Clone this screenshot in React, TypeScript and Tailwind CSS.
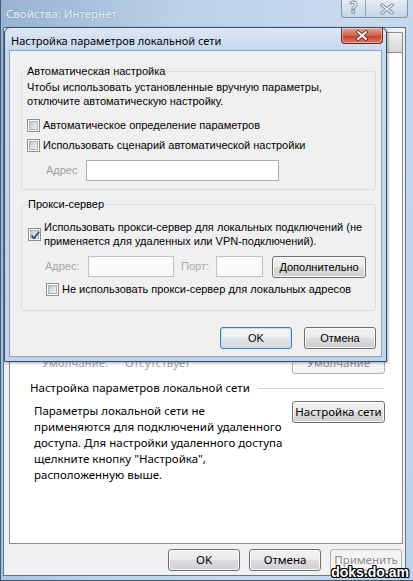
import React from "react";

const SEG = "font-['Noto_Sans',sans-serif]";
const TAH = "font-['Liberation_Sans',Arial,sans-serif]";

function Check({ checked }: { checked?: boolean }) {
  return (
    <span className="relative w-[13px] h-[13px] shrink-0 border border-[#8e8f8f] bg-white p-[1px] flex">
      <span className="flex-1 border border-[#aeb3b9] bg-[linear-gradient(135deg,#c6cacf,#f0f0f0)]" />
      {checked && (
        <svg className="absolute left-0 top-0" width="13" height="13" viewBox="0 0 13 13">
          <path d="M2.5 6.5 L5 9.2 L10.2 2.8" fill="none" stroke="#33457a" strokeWidth="1.8" />
        </svg>
      )}
    </span>
  );
}

function Btn({ children, def, disabled, className = "" }: { children: React.ReactNode; def?: boolean; disabled?: boolean; className?: string }) {
  const base = "h-[22px] rounded-[3px] flex items-center justify-center shrink-0 whitespace-nowrap ";
  if (disabled)
    return <div className={base + "border border-[#adb2b5] bg-[#f4f4f4] text-[#8d8d8d] " + className}>{children}</div>;
  if (def)
    return (
      <div className={base + "border border-[#3c7fb1] bg-[linear-gradient(#f4f6f7_0%,#eef0f2_49%,#e2e5e8_50%,#d6dadd_100%)] shadow-[inset_0_0_0_1px_#bfe3f5] text-black " + className}>
        {children}
      </div>
    );
  return (
    <div className={base + "border border-[#707070] bg-[linear-gradient(#f2f2f2_0%,#ebebeb_49%,#dddddd_50%,#cfcfcf_100%)] shadow-[inset_0_0_0_1px_#fbfbfb] text-black " + className}>
      {children}
    </div>
  );
}

function LanDialog() {
  return (
    <div className="absolute left-[3px] top-[27px] w-[383px] h-[335px] border border-[#34506b] rounded-t-[6px] bg-[linear-gradient(#dbe7f4,#c6d9ee_22px,#bfd3ea)] flex flex-col shadow-[1px_1px_3px_rgba(0,0,0,0.35)]">
      <div className="h-[22px] flex items-start shrink-0">
        <div className={SEG + " pl-[6px] pt-[5px] text-[11px] leading-[16px] text-black whitespace-nowrap"}>
          Настройка параметров локальной сети
        </div>
        <div className="ml-auto mr-[3px] w-[42px] h-[16px] rounded-b-[4px] border border-t-0 border-[#6a2a1e] bg-[linear-gradient(#eaa596,#d0604b_50%,#c24530_55%,#d97a63)] shadow-[inset_0_0_0_1px_rgba(255,255,255,0.35)] flex items-center justify-center">
          <svg width="14" height="11" viewBox="0 0 14 11">
            <path d="M3 2 L11 9 M11 2 L3 9" stroke="#5a2318" strokeWidth="3.6" strokeLinecap="round" />
            <path d="M3 2 L11 9 M11 2 L3 9" stroke="#ffffff" strokeWidth="2" strokeLinecap="round" />
          </svg>
        </div>
      </div>
      <div className={TAH + " flex-1 mx-[4px] mb-[4px] border border-[#8da3b9] bg-[#f0f0f0] flex flex-col pl-[11px] pr-[5px] pt-[13px] text-[11px] text-black"}>
        <fieldset className="border border-[#d5dfe5] rounded-[3px] pl-[5px] pb-[8px]">
          <legend className="px-[1px] ml-[-1px] leading-[14px]">Автоматическая настройка</legend>
          <div className="mt-[2px] leading-[14px]">
            Чтобы использовать установленные вручную параметры,
            <br />
            отключите автоматическую настройку.
          </div>
          <div className="mt-[10px] h-[14px] flex items-center gap-[3px]">
            <Check />
            <span className="leading-[14px]">Автоматическое определение параметров</span>
          </div>
          <div className="mt-[6px] h-[14px] flex items-center gap-[3px]">
            <Check />
            <span className="leading-[14px]">Использовать сценарий автоматической настройки</span>
          </div>
          <div className="mt-[8px] flex items-center pl-[19px]">
            <span className="w-[40px] text-[#a0a0a0]">Адрес</span>
            <span className="w-[193px] h-[21px] border border-[#adadad] bg-white" />
          </div>
        </fieldset>
        <fieldset className="mt-[7px] border border-[#d5dfe5] rounded-[3px] pl-[6px] pb-[14px]">
          <legend className="px-[1px] ml-[-1px] leading-[14px]">Прокси-сервер</legend>
          <div className="mt-[9px] flex items-center gap-[3px]">
            <Check checked />
            <span className="leading-[14px]">
              Использовать прокси-сервер для локальных подключений (не
              <br />
              применяется для удаленных или VPN-подключений).
            </span>
          </div>
          <div className="mt-[7px] h-[22px] flex items-center pl-[17px]">
            <span className="w-[43px] text-[#a9a9a9]">Адрес:</span>
            <span className="w-[86px] h-[21px] border border-[#c2c2c2] bg-[#fafafa]" />
            <span className="ml-[7px] w-[35px] text-[#a9a9a9]">Порт:</span>
            <span className="w-[47px] h-[21px] border border-[#c2c2c2] bg-[#fafafa]" />
            <Btn className="ml-[9px] w-[94px] mt-[2px]">Дополнительно</Btn>
          </div>
          <div className="mt-[5px] h-[14px] flex items-center gap-[3px] pl-[18px]">
            <Check />
            <span className="leading-[14px]">Не использовать прокси-сервер для локальных адресов</span>
          </div>
        </fieldset>
        <div className="mt-[16px] flex justify-end gap-[12px]">
          <Btn def className="w-[72px]">OK</Btn>
          <Btn className="w-[72px]">Отмена</Btn>
        </div>
      </div>
    </div>
  );
}

export default function App() {
  return (
    <div className={SEG + " w-[413px] h-[581px] relative overflow-hidden bg-[linear-gradient(100deg,#98b3d0,#bcd1e8_35%,#c8daee_70%,#bdd2e8)] flex flex-col border-l border-b border-[#3f5b76]"}>
      <div className="h-[27px] shrink-0 flex items-start">
        <div className="pl-[5px] pt-[6px] text-[11.5px] leading-[16px] text-[#e9eff6] [text-shadow:0_0_2px_#7f98b3] whitespace-nowrap">
          Свойства: Интернет
        </div>
        <div className="ml-auto mr-[5px] flex h-[18px] border border-t-0 border-[#7d93aa] rounded-b-[4px] overflow-hidden bg-[linear-gradient(#e6eef6,#d3e0ed_50%,#c6d6e7)]">
          <div className={"w-[24px] flex items-center justify-center border-r border-[#8ea3b8] text-[15px] font-bold text-[#f4f7fa] [-webkit-text-stroke:0.8px_#7a8899] font-['DejaVu_Sans',sans-serif]"}>?</div>
          <div className="w-[41px] flex items-center justify-center">
            <svg width="16" height="12" viewBox="0 0 16 12">
              <path d="M3 2 L13 10 M13 2 L3 10" stroke="#7a8899" strokeWidth="3.4" strokeLinecap="round" />
              <path d="M3 2 L13 10 M13 2 L3 10" stroke="#f5f8fb" strokeWidth="1.6" strokeLinecap="round" />
            </svg>
          </div>
        </div>
      </div>
      <div className="flex-1 ml-[2px] mr-[7px] mb-[4px] border border-[#5b7791] bg-[#f0f0f0] flex flex-col">
        <div className="h-[24px] shrink-0 flex items-end justify-end pr-[2px]">
          <div className="w-[60px] h-[20px] border border-b-0 border-[#898c95] rounded-t-[2px] bg-[linear-gradient(#f2f2f2,#d6d6d6)]" />
        </div>
        <div className="flex-1 ml-[5px] mr-[2px] border border-[#898c95] bg-white flex flex-col text-[11.5px] text-black">
          <div className="mt-[298px] h-[23px] flex items-center pl-[32px] pr-[17px] text-[#a3a3a3]">
            <span className="w-[83px]">Умолчание:</span>
            <span>Отсутствует</span>
            <Btn disabled className="ml-auto w-[93px]">Умолчание</Btn>
          </div>
          <div className="mt-[6px] h-[16px] flex items-center pl-[20px] pr-[18px]">
            <span className="leading-[16px] whitespace-nowrap">Настройка параметров локальной сети</span>
            <span className="flex-1 ml-[8px] h-px bg-[#d5d5d5]" />
          </div>
          <div className="mt-[5px] flex items-start pl-[24px] pr-[17px]">
            <div className="mt-[2px] leading-[16px] whitespace-nowrap">
              Параметры локальной сети не
              <br />
              применяются для подключений удаленного
              <br />
              доступа. Для настройки удаленного доступа
              <br />
              щелкните кнопку "Настройка",
              <br />
              расположенную выше.
            </div>
            <Btn className="ml-auto w-[93px]">Настройка сети</Btn>
          </div>
        </div>
        <div className="h-[31px] shrink-0 flex items-center justify-end gap-[9px] pr-[3px] text-[11.5px]">
          <Btn className="w-[72px]">OK</Btn>
          <Btn className="w-[72px]">Отмена</Btn>
          <Btn disabled className="w-[72px]">Применить</Btn>
        </div>
      </div>
      <LanDialog />
      <div className="absolute right-[4px] bottom-[0px] font-['Liberation_Sans',Arial,sans-serif] font-bold text-[14px] leading-[15px] text-white [text-shadow:1px_0_0_#000,-1px_0_0_#000,0_1px_0_#000,0_-1px_0_#000,1px_1px_0_#000,-1px_-1px_0_#000,1px_-1px_0_#000,-1px_1px_0_#000]">
        doks.do.am
      </div>
    </div>
  );
}
